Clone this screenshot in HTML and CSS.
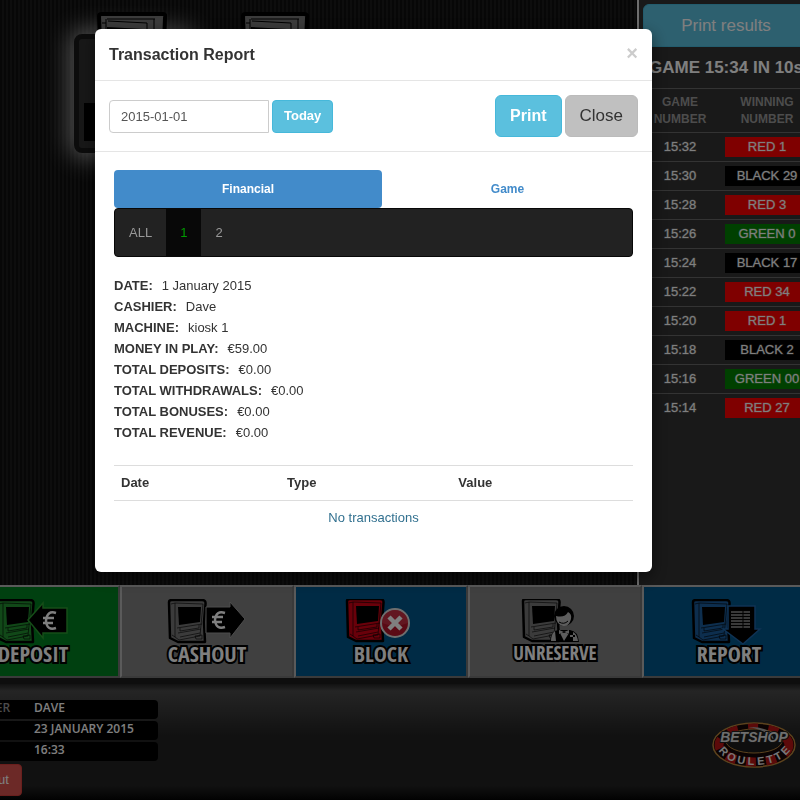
FILE: index.html
```html
<!DOCTYPE html>
<html lang="en">
<head>
<meta charset="utf-8">
<title>Betshop Roulette</title>
<link rel="stylesheet" href="styles.css">
</head>
<body>
<svg class="sprite" aria-hidden="true">
  <symbol id="monitor" viewBox="0 0 42 46">
    <path d="M3 3 Q3 1 6 1 L36 1 Q40 1 39.500 5 L38 23 L39 43 L12 43 L4 39 Z" fill="currentColor" stroke="#000" stroke-width="2.500" stroke-linejoin="round"/>
    <path d="M9 4 L37 5 L34 37 L13 41 L9 38 Z M5 5 L9 4 M6 36 L9 38 M11 29 L36 25 M12 34 L35 30 M14 38 L34 34 M14 29 V32 L33 29 V26" fill="none" stroke="#000" stroke-opacity=".6" stroke-width="1"/>
    <path d="M12 8 L35 8 L34 23 L13 26 Z" fill="#000"/>
    <path d="M29 37 L36 36 V40 H30 Z" fill="none" stroke="#000" stroke-opacity=".6"/>
  </symbol>
</svg>
<div class="page">
  <main class="main">
    <section class="board" aria-label="Machines">
      <div class="machine selected">
        <svg class="machine-icon" viewBox="0 0 70 60" aria-hidden="true">
          <path d="M2 4 Q2 2 5 2 L66 2 Q69 2 68 6 L66 58 H4 Z" fill="#777" stroke="#000" stroke-width="4"/>
          <path d="M10 7 L58 7 M9 7 V30 M11 9 L50 11 V30 M57 7 V30 M5 11 H9" fill="none" stroke="#000" stroke-width="1"/>
          <path d="M10 15 L46 17 V50 H9 Z"/>
        </svg>
        <div class="machine-slot"></div>
      </div>
      <div class="machine">
        <svg class="machine-icon" viewBox="0 0 70 60" aria-hidden="true">
          <path d="M2 4 Q2 2 5 2 L63 2 Q67 2 66 6 L64 58 H4 Z" fill="#777" stroke="#000" stroke-width="4"/>
          <path d="M10 7 L58 7 M9 7 V30 M11 9 L50 11 V30 M57 7 V30 M5 11 H9" fill="none" stroke="#000" stroke-width="1"/>
          <path d="M10 15 L46 17 V50 H9 Z"/>
        </svg>
      </div>
    </section>
    <aside class="results">
      <button class="btn print-results" type="button">Print results</button>
      <h2 class="countdown">GAME 15:34 IN 10s</h2>
      <table class="results-table">
        <thead><tr><th>GAME NUMBER</th><th>WINNING NUMBER</th></tr></thead>
        <tbody>
          <tr><td>15:32</td><td><span class="pill red">RED 1</span></td></tr>
          <tr><td>15:30</td><td><span class="pill black">BLACK 29</span></td></tr>
          <tr><td>15:28</td><td><span class="pill red">RED 3</span></td></tr>
          <tr><td>15:26</td><td><span class="pill green">GREEN 0</span></td></tr>
          <tr><td>15:24</td><td><span class="pill black">BLACK 17</span></td></tr>
          <tr><td>15:22</td><td><span class="pill red">RED 34</span></td></tr>
          <tr><td>15:20</td><td><span class="pill red">RED 1</span></td></tr>
          <tr><td>15:18</td><td><span class="pill black">BLACK 2</span></td></tr>
          <tr><td>15:16</td><td><span class="pill green">GREEN 00</span></td></tr>
          <tr><td>15:14</td><td><span class="pill red">RED 27</span></td></tr>
        </tbody>
      </table>
    </aside>
  </main>

  <nav class="actions">
    <button class="action deposit" type="button">
      <svg viewBox="0 0 84 46" aria-hidden="true">
        <use href="#monitor" x="3" y="0" width="42" height="46"/>
        <path d="M37 21 L52 4 V9 H76 V34 H52 V39 Z" fill="#000" stroke="#2b9a30" stroke-width="1.500"/>
        <path d="M65 14 Q56 11 55 22 Q56 32 65 29 M52 19 H63 M52 24 H62" fill="none" stroke="#fff" stroke-width="2.500"/>
      </svg>
      <span>DEPOSIT</span>
    </button>
    <button class="action gray" type="button">
      <svg viewBox="0 0 84 46" aria-hidden="true">
        <use href="#monitor" x="1" y="0" width="42" height="46"/>
        <path d="M80 20 L65 3 V8 H41 V34 H65 V39 Z" fill="#000" stroke="#999" stroke-width="1"/>
        <path d="M60 14 Q51 11 50 21 Q51 31 60 28 M47 18 H58 M47 23 H57" fill="none" stroke="#fff" stroke-width="2.500"/>
      </svg>
      <span>CASHOUT</span>
    </button>
    <button class="action block" type="button">
      <svg viewBox="0 0 84 46" aria-hidden="true">
        <use href="#monitor" x="5" y="-1" width="42" height="46"/>
        <circle cx="56" cy="24" r="14" fill="#b5152b" stroke="#ddd" stroke-width="2"/>
        <path d="M43 24 A13 13 0 0 1 69 24 Q56 29 43 24" fill="#d3485a" opacity=".5"/>
        <path d="M50 18 L62 30 M62 18 L50 30" stroke="#fff" stroke-width="4.500"/>
      </svg>
      <span>BLOCK</span>
    </button>
    <button class="action gray" type="button">
      <svg viewBox="0 0 84 46" aria-hidden="true">
        <use href="#monitor" x="7" y="-1" width="42" height="46"/>
        <circle cx="51" cy="17" r="10"/>
        <path d="M43 17 Q52 19 55 13 Q59 15 58 20 Q56 28 50 27 Q43 25 43 17" fill="#bbb"/>
        <path d="M46 23 Q51 26 55 22" fill="none" stroke="#000"/>
        <path d="M37 43 Q38 31 46 31 H57 Q65 32 66 43 Z"/>
        <path d="M38 42 Q38 35 42 32 L43 42 Z M65 42 Q64 35 60 33 L60 42 Z M47 34 L51 42 L56 34 Z M57 36 H62 V38 H57 Z M46 31 L51 33 L56 31 V35 L51 33 L46 35 Z" fill="#bbb"/>
      </svg>
      <span class="long">UNRESERVE</span>
    </button>
    <button class="action report" type="button">
      <svg viewBox="0 0 84 46" aria-hidden="true">
        <use href="#monitor" x="3" y="0" width="42" height="46"/>
        <path d="M41 7 H68 V30 H73 L56 45 L36 30 H41 Z" fill="#000" stroke="#1e64a8" stroke-width="1.500"/>
        <path d="M44 13 H63 M44 16 H63 M44 19 H63 M44 22 H63 M44 25 H63 M44 28 H63" stroke="#999" stroke-width="1.500"/>
        <path d="M56 11 V30" stroke="#000"/>
      </svg>
      <span>REPORT</span>
    </button>
  </nav>

  <footer class="footer">
    <div class="session">
      <dl>
        <div><dt>CASHIER</dt><dd>DAVE</dd></div>
        <div><dt>DATE</dt><dd>23 JANUARY 2015</dd></div>
        <div><dt>TIME</dt><dd>16:33</dd></div>
      </dl>
      <button class="btn logout" type="button">Logout</button>
    </div>
    <svg class="logo" viewBox="0 0 86 48" role="img" aria-label="Betshop Roulette">
      <defs>
        <path id="logo-arc" d="M5 25 Q13 44 43 44 Q72 44 82 25"/>
      </defs>
      <ellipse cx="43" cy="24" rx="41" ry="22" fill="#160606" stroke="#b8843a" stroke-width="1.500"/>
      <ellipse class="wheel" cx="43" cy="24" rx="35" ry="17"/>
      <ellipse cx="43" cy="20" rx="28" ry="12" fill="#1c1c1c" stroke="#b8843a"/>
      <path d="M37 6 Q61 5 63 20 Q57 9 37 6" fill="#aaa"/>
      <text class="logo-name" x="43" y="21" text-anchor="middle">BETSHOP</text>
      <text class="logo-sub"><textPath href="#logo-arc" startOffset="50%" text-anchor="middle">R O U L E T T E</textPath></text>
    </svg>
  </footer>
</div>

<div class="backdrop">
  <div class="modal" role="dialog" aria-labelledby="modal-title">
    <header class="modal-header">
      <h1 id="modal-title">Transaction Report</h1>
      <button class="dismiss" type="button" aria-label="Close">×</button>
    </header>
    <div class="toolbar">
      <input class="date" type="text" value="2015-01-01" aria-label="Report date">
      <button class="btn today" type="button">Today</button>
      <button class="btn print" type="button">Print</button>
      <button class="btn close" type="button">Close</button>
    </div>
    <div class="modal-body">
      <nav class="tabs">
        <a class="tab active" href="#financial">Financial</a>
        <a class="tab" href="#game">Game</a>
      </nav>
      <nav class="machines">
        <a href="#all">ALL</a>
        <a class="active" href="#m1">1</a>
        <a href="#m2">2</a>
      </nav>
      <dl class="summary">
        <div><dt>DATE:</dt><dd>1 January 2015</dd></div>
        <div><dt>CASHIER:</dt><dd>Dave</dd></div>
        <div><dt>MACHINE:</dt><dd>kiosk 1</dd></div>
        <div><dt>MONEY IN PLAY:</dt><dd>€59.00</dd></div>
        <div><dt>TOTAL DEPOSITS:</dt><dd>€0.00</dd></div>
        <div><dt>TOTAL WITHDRAWALS:</dt><dd>€0.00</dd></div>
        <div><dt>TOTAL BONUSES:</dt><dd>€0.00</dd></div>
        <div><dt>TOTAL REVENUE:</dt><dd>€0.00</dd></div>
      </dl>
      <table class="transactions">
        <thead><tr><th>Date</th><th>Type</th><th>Value</th></tr></thead>
        <tbody><tr><td colspan="3">No transactions</td></tr></tbody>
      </table>
    </div>
  </div>
</div>
</body>
</html>
```
FILE: styles.css
```css
* { box-sizing: border-box; }

body {
  margin: 0;
  overflow: hidden;
  background: #141414;
  color: #333;
  font: 13px/20px "Liberation Sans", Arial, sans-serif;
}

button, input { font: inherit; }
h1, h2, dl, dd { margin: 0; }
a { text-decoration: none; }
.sprite { position: absolute; width: 0; height: 0; }

.page {
  display: flex;
  flex-direction: column;
  min-height: 100vh;
  overflow: hidden;
  background: repeating-linear-gradient(90deg, #0e0e0e 0 2px, #1a1a1a 2px 4px);
}

.btn {
  border: 1px solid #46b8da;
  border-radius: 4px;
  background: #5bc0de;
  color: #fff;
}

/* Board and results */
.main {
  flex: 1;
  display: grid;
  grid-template-columns: 1fr 176px;
  margin-right: -13px;
}

.board {
  display: flex;
  align-items: flex-start;
  gap: 28px;
  padding: 34px 0 0 74px;
}

.machine {
  display: flex;
  flex-direction: column;
  align-items: center;
  width: 116px;
  height: 119px;
  border-radius: 8px;
}

.machine.selected {
  border: 5px solid #181818;
  background: #303030;
  box-shadow: 0 0 24px 4px #aaa;
}

.machine-icon { width: 70px; height: 60px; margin-top: -22px; flex: none; }
.selected .machine-icon { margin-top: -27px; }
.machine-slot { width: 96px; height: 38px; margin-top: 31px; background: #000; }

.results {
  padding: 4px 4px 0;
  border-left: 2px solid #ddd;
  background: #323232;
}

.print-results {
  display: block;
  width: 100%;
  height: 43px;
  border-radius: 6px;
  font-size: 17px;
}

.countdown {
  padding: 10px 0;
  border-bottom: 1px solid #666;
  color: #fff;
  font-size: 17px;
  line-height: 21px;
  text-align: center;
  white-space: nowrap;
}

.results-table {
  width: 100%;
  border-collapse: collapse;
  color: #fff;
  text-align: center;
}

.results-table th {
  padding: 5px 0 4px;
  color: #999;
  font-size: 12px;
  line-height: 17px;
}

.results-table th:first-child { width: 74px; }
.results-table td { padding: 4px 0; border-top: 1px solid #666; }
.results-table td:last-child { padding-left: 8px; }
.results-table th:last-child { padding-left: 8px; }

.results-table tbody { -webkit-text-stroke: 1px rgba(255, 255, 255, .3); }

.pill { display: block; }
.red { background: #f00; }
.black { background: #000; }
.green { background: #008000; }

/* Action bar */
.actions {
  display: grid;
  grid-template-columns: repeat(5, 174px);
  margin-left: -54px;
}

.action {
  display: flex;
  flex-direction: column;
  align-items: center;
  height: 93px;
  padding: 12px 0 0;
  border: 2px solid;
  border-color: #b4b4b4 #747474 #747474 #b4b4b4;
  color: #777;
}

.action svg { width: 84px; height: 46px; flex: none; }

.action span {
  margin-top: -6px;
  color: #fff;
  font: bold 22px/28px "Open Sans Condensed", "Roboto Condensed", Roboto, sans-serif;
  -webkit-text-stroke: 4px #000;
  paint-order: stroke fill;
}

.action .long { font-size: 19px; }

.deposit { background: #008020; color: #229030; }
.gray { background: #808080; color: #777; }
.block { background: #00568a; color: #d20014; }
.report { background: #00568a; color: #1a5c9c; }

/* Footer */
.footer {
  display: flex;
  justify-content: space-between;
  align-items: flex-start;
  height: 122px;
  padding: 16px 3px 0 0;
  border-top: 6px solid #1c1c1c;
  background: linear-gradient(#242424, #4a4a4a 6%, #222 45%, #222 88%, #040404);
  background-clip: padding-box;
}

.session { width: 208px; margin-left: -50px; }

.session dl {
  display: grid;
  gap: 2px;
  margin-bottom: 3px;
  font: 600 12px/16px "Open Sans", sans-serif;
}

.session dl div {
  display: grid;
  grid-template-columns: 73px 1fr;
  height: 19px;
  padding-left: 11px;
  border-radius: 4px;
  background: #000;
}

.session dt { color: #999; }
.session dd { color: #fff; }

.logout {
  height: 32px;
  padding: 0 12px;
  margin-left: 6px;
  border-color: #d43f3a;
  background: #d9534f;
}

.logo { width: 86px; height: 48px; margin-top: 21px; }
.wheel { fill: none; stroke: #b81414; stroke-width: 9; stroke-dasharray: 10 10; }
.logo-name { fill: #ddd; stroke: #222; stroke-width: 2; paint-order: stroke; font: italic bold 14px "Liberation Sans", sans-serif; }
.logo-sub { fill: #eee; font: bold 11px "Liberation Sans", sans-serif; }

/* Dialog */
.backdrop {
  position: fixed;
  inset: 0;
  padding: 29px 148px 0 95px;
  background: rgba(0, 0, 0, .5);
}

.modal {
  max-width: 600px;
  border-radius: 6px;
  background: #fff;
  box-shadow: 0 5px 15px rgba(0, 0, 0, .5);
}

.modal-header {
  display: flex;
  justify-content: space-between;
  padding: 14px;
  border-bottom: 1px solid #e5e5e5;
}

.modal-header h1 { font-size: 16px; line-height: 23px; }

.dismiss {
  height: 20px;
  padding: 0;
  border: 0;
  background: none;
  color: #ccc;
  font-size: 20px;
  font-weight: bold;
  line-height: 18px;
}

.toolbar {
  display: flex;
  align-items: center;
  gap: 3px;
  padding: 14px;
  border-bottom: 1px solid #e5e5e5;
}

.date {
  width: 160px;
  height: 33px;
  padding: 0 11px;
  border: 1px solid #ccc;
  border-radius: 4px 0 0 4px;
  color: #555;
}

.today { height: 33px; padding: 0 11px; font-weight: bold; }
.print, .close { height: 42px; padding: 0 14px; border-radius: 6px; }
.print { margin-left: auto; font-size: 16px; font-weight: bold; }
.close { border-color: #bbb; background: #c0c0c0; color: #333; font-size: 17px; }

.modal-body { padding: 18px 19px 37px; }

.tabs { display: grid; grid-template-columns: 268fr 251fr; }

.tab {
  padding: 9px;
  border-radius: 4px;
  color: #428bca;
  font-size: 12px;
  font-weight: bold;
  text-align: center;
}

.tab.active { background: #428bca; color: #fff; }

.machines {
  display: flex;
  border: 1px solid #080808;
  border-radius: 4px;
  background: #222;
}

.machines a { padding: 14px; color: #999; line-height: 19px; }
.machines .active { background: #080808; color: #009a00; }

.summary { margin: 18px 0 22px; line-height: 21px; }
.summary div { display: flex; gap: 9px; }
.summary dt { font-weight: bold; }

.transactions {
  width: 100%;
  border-top: 1px solid #ddd;
  border-collapse: collapse;
}

.transactions th, .transactions td { padding: 7px; text-align: left; }
.transactions th:nth-child(1) { width: 32%; }
.transactions th:nth-child(2) { width: 33%; }
.transactions td { border-top: 1px solid #ddd; color: #31708f; text-align: center; }
```
